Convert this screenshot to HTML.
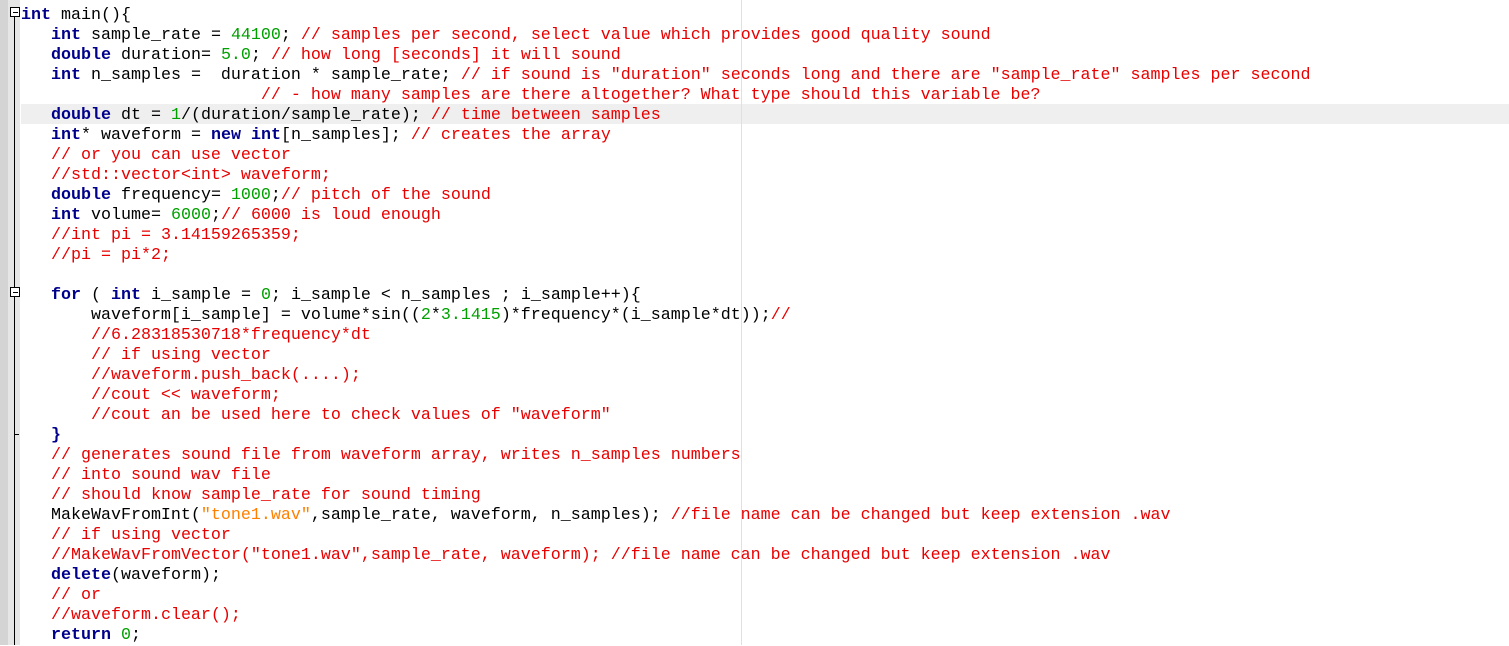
<!DOCTYPE html>
<html><head><style>
body{margin:0;width:1509px;height:645px;overflow:hidden;background:#fff;position:relative;font-family:"Liberation Mono",monospace;}
.g1{position:absolute;left:0;top:0;width:8px;height:645px;background:#d4d4d4}
.g2{position:absolute;left:8px;top:0;width:12px;height:645px;background:#e6e6e6}
.vl{position:absolute;left:14px;width:1px;background:#000}
.box{position:absolute;left:10px;width:8px;height:8px;border:1px solid #000;background:#fff}
.box:after{content:"";position:absolute;left:2px;top:4px;width:5px;height:1px;background:#000}
.hl{position:absolute;left:21px;top:104px;width:1488px;height:20px;background:#efefef}
.edge{position:absolute;left:741px;top:0;width:1px;height:645px;background:#e0e0e0}
pre{position:absolute;left:21px;top:6px;margin:0;font-family:"Liberation Mono",monospace;font-size:16.67px;line-height:20px;color:#000}
b{color:#00008b}
.n{color:#00a000}.c{color:#e80000}.s{color:#ff8000}
</style></head><body>
<div class="g1"></div><div class="g2"></div>
<div class="hl"></div><div class="edge"></div>
<div class="vl" style="top:16px;height:629px"></div>
<div class="box" style="top:7px"></div>
<div class="box" style="top:287px"></div>
<div style="position:absolute;left:14px;top:434px;width:5px;height:1px;background:#000"></div>
<pre><b>int</b> main(){
   <b>int</b> sample_rate = <span class="n">44100</span>; <span class="c">// samples per second, select value which provides good quality sound</span>
   <b>double</b> duration= <span class="n">5.0</span>; <span class="c">// how long [seconds] it will sound</span>
   <b>int</b> n_samples =  duration * sample_rate; <span class="c">// if sound is "duration" seconds long and there are "sample_rate" samples per second</span>
                        <span class="c">// - how many samples are there altogether? What type should this variable be?</span>
   <b>double</b> dt = <span class="n">1</span>/(duration/sample_rate); <span class="c">// time between samples</span>
   <b>int</b>* waveform = <b>new</b> <b>int</b>[n_samples]; <span class="c">// creates the array</span>
   <span class="c">// or you can use vector</span>
   <span class="c">//std::vector&lt;int&gt; waveform;</span>
   <b>double</b> frequency= <span class="n">1000</span>;<span class="c">// pitch of the sound</span>
   <b>int</b> volume= <span class="n">6000</span>;<span class="c">// 6000 is loud enough</span>
   <span class="c">//int pi = 3.14159265359;</span>
   <span class="c">//pi = pi*2;</span>

   <b>for</b> ( <b>int</b> i_sample = <span class="n">0</span>; i_sample &lt; n_samples ; i_sample++){
       waveform[i_sample] = volume*sin((<span class="n">2</span>*<span class="n">3.1415</span>)*frequency*(i_sample*dt));<span class="c">//</span>
       <span class="c">//6.28318530718*frequency*dt</span>
       <span class="c">// if using vector</span>
       <span class="c">//waveform.push_back(....);</span>
       <span class="c">//cout &lt;&lt; waveform;</span>
       <span class="c">//cout an be used here to check values of "waveform"</span>
   <b>}</b>
   <span class="c">// generates sound file from waveform array, writes n_samples numbers</span>
   <span class="c">// into sound wav file</span>
   <span class="c">// should know sample_rate for sound timing</span>
   MakeWavFromInt(<span class="s">"tone1.wav"</span>,sample_rate, waveform, n_samples); <span class="c">//file name can be changed but keep extension .wav</span>
   <span class="c">// if using vector</span>
   <span class="c">//MakeWavFromVector("tone1.wav",sample_rate, waveform); //file name can be changed but keep extension .wav</span>
   <b>delete</b>(waveform);
   <span class="c">// or</span>
   <span class="c">//waveform.clear();</span>
   <b>return</b> <span class="n">0</span>;
</pre>
</body></html>
